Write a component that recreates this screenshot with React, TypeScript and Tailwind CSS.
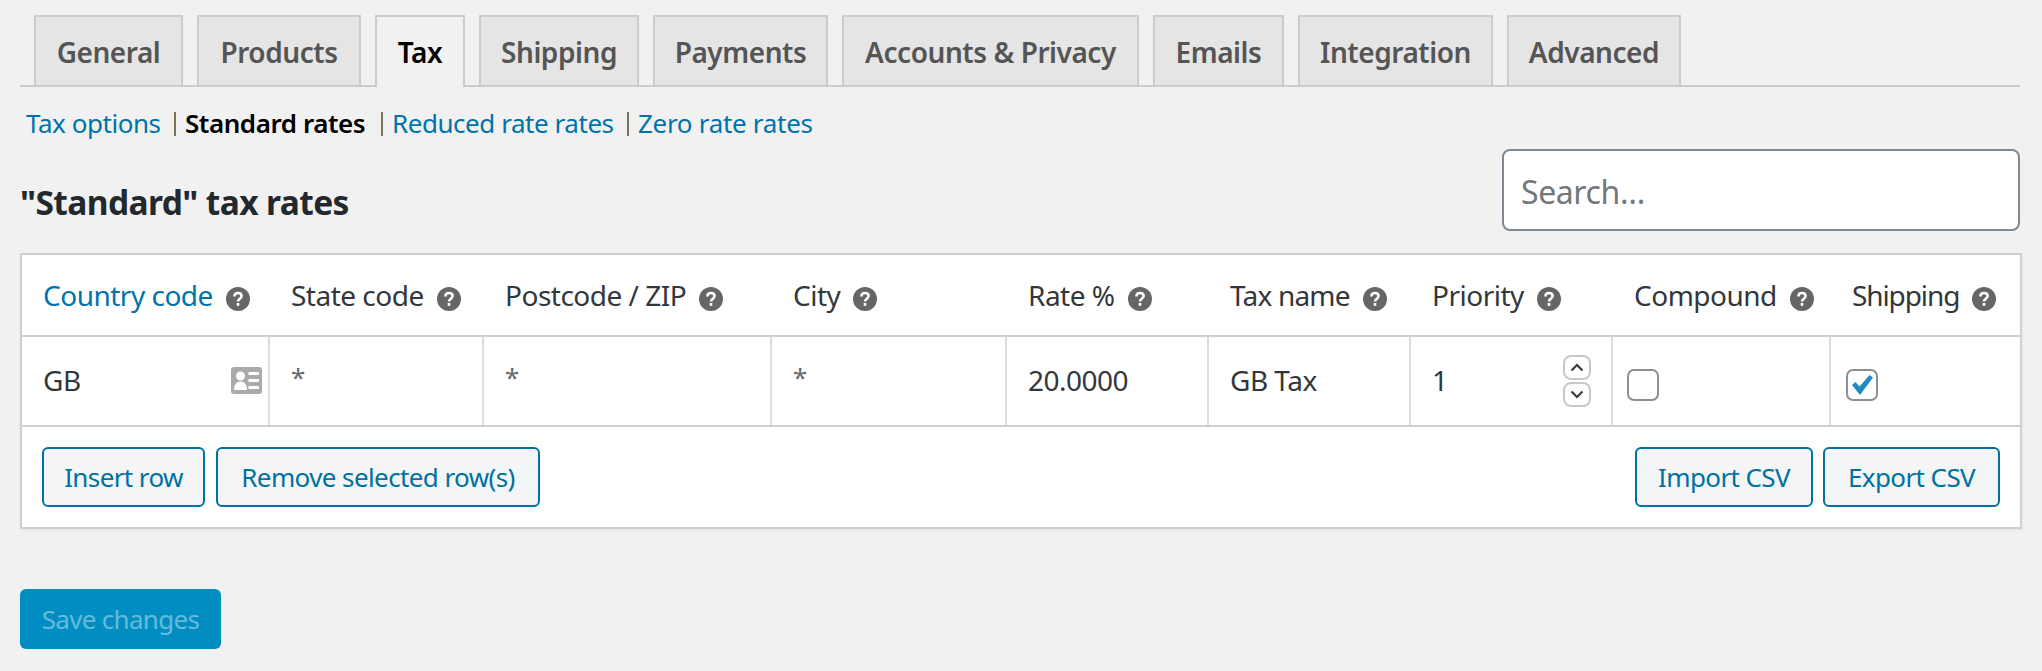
const tabs = [
  { label: "General", w: "w-[149px]" },
  { label: "Products", w: "w-[164px]" },
  { label: "Tax", w: "w-[90px]", active: true },
  { label: "Shipping", w: "w-[160px]" },
  { label: "Payments", w: "w-[175px]" },
  { label: "Accounts & Privacy", w: "w-[297px]" },
  { label: "Emails", w: "w-[131px]" },
  { label: "Integration", w: "w-[195px]" },
  { label: "Advanced", w: "w-[174px]" },
];

const columns = [
  { label: "Country code", w: "w-[246px]", value: "GB", link: true },
  { label: "State code", w: "w-[214px]", value: "*" },
  { label: "Postcode / ZIP", w: "w-[288px]", value: "*" },
  { label: "City", w: "w-[235px]", value: "*" },
  { label: "Rate %", w: "w-[202px]", value: "20.0000" },
  { label: "Tax name", w: "w-[202px]", value: "GB Tax", track: "tracking-[-0.8px]" },
  { label: "Priority", w: "w-[202px]", value: "1" },
  { label: "Compound", w: "w-[218px]", value: "" },
  { label: "Shipping", w: "w-[191px]", value: "", track: "tracking-[-1.1px]" },
];

function HelpTip() {
  return (
    <svg viewBox="0 0 24 24" className="ml-[13px] mt-[8px] h-[24px] w-[24px] shrink-0">
      <circle cx="12" cy="12" r="12" fill="#666" />
      <path
        d="M8.400 9.600c0-2.200 1.500-3.600 3.600-3.600s3.600 1.300 3.600 3.100c0 2.600-3.600 2.600-3.600 5.400"
        fill="none"
        stroke="#fff"
        strokeWidth="2.600"
      />
      <rect x="10.700" y="16" width="2.600" height="2.800" fill="#fff" />
    </svg>
  );
}

function IdCard() {
  return (
    <svg viewBox="0 0 31 27" className="h-[27px] w-[31px]">
      <rect width="31" height="27" rx="3" fill="#aaa" />
      <circle cx="9.500" cy="9" r="4.500" fill="#fff" />
      <path d="M3 23c0-5.500 2.500-8.500 6.500-8.500s6.500 3 6.500 8.500z" fill="#fff" />
      <rect x="17.500" y="5" width="10.500" height="3" fill="#fff" />
      <rect x="17.500" y="12" width="10.500" height="3" fill="#fff" />
      <rect x="17.500" y="19" width="10.500" height="3" fill="#fff" />
    </svg>
  );
}

function Spinner() {
  return (
    <div className="absolute right-[20px] top-[18px] flex flex-col gap-[2px]">
      <div className="flex h-[25px] w-[28px] items-center justify-center rounded-[8px] border-2 border-[#c8c8c8] bg-white">
        <svg viewBox="0 0 14 9" className="h-[9px] w-[14px]">
          <path d="M1.500 7.500 7 2l5.500 5.500" fill="none" stroke="#3c3c3c" strokeWidth="2.200" />
        </svg>
      </div>
      <div className="flex h-[25px] w-[28px] items-center justify-center rounded-[8px] border-2 border-[#c8c8c8] bg-white">
        <svg viewBox="0 0 14 9" className="h-[9px] w-[14px]">
          <path d="M1.500 1.500 7 7l5.500-5.500" fill="none" stroke="#3c3c3c" strokeWidth="2.200" />
        </svg>
      </div>
    </div>
  );
}

function Checkbox({ checked }: { checked?: boolean }) {
  return (
    <div className="flex h-[32px] w-[32px] items-center justify-center rounded-[7px] border-2 border-[#8c8f94] bg-white">
      {checked && (
        <svg viewBox="0 0 24 22" className="h-[22px] w-[24px]">
          <path d="M2 11l3.500-3 4 4.500L19.500 1 23 3.500 10 21z" fill="#1e8cbe" />
        </svg>
      )}
    </div>
  );
}

function OutlineButton({ label, className }: { label: string; className: string }) {
  return (
    <button className={`h-[60px] rounded-[6px] border-2 border-[#0071a1] bg-[#f3f5f6] text-[26px] text-[#0071a1] ${className}`}>
      {label}
    </button>
  );
}

export default function App() {
  return (
    <div className="h-[671px] w-[2042px] overflow-hidden bg-[#f1f1f1] pl-[20px] pt-[15px] font-['Noto_Sans',sans-serif] text-[26px] tracking-[-0.6px] text-[#32373c]">
      <div className="flex h-[72px] w-[2000px] gap-[14px] border-b-2 border-[#cccccc] pl-[14px]">
        {tabs.map((tab) => (
          <div
            key={tab.label}
            className={
              tab.active
                ? `flex h-[72px] items-center justify-center border-2 border-b-0 border-[#cccccc] bg-[#f1f1f1] pb-[2px] pt-[1px] text-[28px] font-semibold tracking-[-0.45px] text-black ${tab.w}`
                : `flex h-[70px] items-center justify-center border-2 border-b-0 border-[#cccccc] bg-[#e5e5e5] pt-[1px] text-[28px] font-semibold tracking-[-0.45px] text-[#555555] ${tab.w}`
            }
          >
            {tab.label}
          </div>
        ))}
      </div>

      <div className="mt-[14px] flex h-[44px] items-center pl-[6px] leading-[36px] tracking-[-0.45px]">
        <span className="w-[134px] whitespace-nowrap text-[#0073aa]">Tax options</span>
        <span className="ml-[14px] mt-[2px] h-[24px] w-[2px] bg-[#7d7360]" />
        <span className="ml-[9px] w-[182px] whitespace-nowrap font-semibold text-black">Standard rates</span>
        <span className="ml-[14px] mt-[2px] h-[24px] w-[2px] bg-[#7d7360]" />
        <span className="ml-[9px] w-[222px] whitespace-nowrap text-[#0073aa]">Reduced rate rates</span>
        <span className="ml-[13px] mt-[2px] h-[24px] w-[2px] bg-[#7d7360]" />
        <span className="ml-[9px] whitespace-nowrap tracking-[-0.3px] text-[#0073aa]">Zero rate rates</span>
      </div>

      <div className="mt-[4px] flex h-[82px] w-[2000px] items-center justify-between">
        <h2 className="mt-[24px] text-[33.500px] font-bold text-[#23282d]">"Standard" tax rates</h2>
        <div className="flex h-[82px] w-[518px] items-center rounded-[8px] border-2 border-[#7e8993] bg-white pl-[17px] pt-[3px] text-[32px] tracking-[-0.4px] text-[#72777c]">
          Search…
        </div>
      </div>

      <div className="mt-[22px] w-[2002px] border-2 border-[#ccd0d4] bg-white text-[28px] tracking-[-0.5px] shadow-[0_1px_2px_rgba(0,0,0,0.06)]">
        <div className="flex h-[82px] border-b-2 border-[#ccd0d4]">
          {columns.map((col, i) => (
            <div
              key={col.label}
              className={`flex items-center whitespace-nowrap pb-[1px] ${i === 0 ? "pl-[21px]" : "pl-[23px]"} ${col.w} ${col.track ?? ""} ${col.link ? "text-[#0073aa]" : ""}`}
            >
              {col.label}
              <HelpTip />
            </div>
          ))}
        </div>

        <div className="flex h-[90px] border-b-2 border-[#ccd0d4]">
          {columns.map((col, i) => (
            <div
              key={col.label}
              className={`relative flex items-center pb-[2px] pl-[21px] ${col.w} ${i > 0 ? "border-l-2 border-[#dcdcde]" : ""}`}
            >
              {col.value === "*" ? (
                <span className="-mt-[6px] text-[26px] text-[#646970]">*</span>
              ) : (
                <span>{col.value}</span>
              )}
              {i === 0 && (
                <div className="absolute right-[6px] top-[30px]">
                  <IdCard />
                </div>
              )}
              {col.label === "Priority" && <Spinner />}
              {col.label === "Compound" && (
                <div className="-ml-[7px] mt-[10px]">
                  <Checkbox />
                </div>
              )}
              {col.label === "Shipping" && (
                <div className="-ml-[6px] mt-[10px]">
                  <Checkbox checked />
                </div>
              )}
            </div>
          ))}
        </div>

        <div className="flex h-[100px] items-center justify-between pl-[20px] pr-[20px] tracking-[-0.6px]">
          <div className="flex gap-[11px]">
            <OutlineButton label="Insert row" className="w-[163px]" />
            <OutlineButton label="Remove selected row(s)" className="w-[324px]" />
          </div>
          <div className="flex gap-[10px]">
            <OutlineButton label="Import CSV" className="w-[178px]" />
            <OutlineButton label="Export CSV" className="w-[177px]" />
          </div>
        </div>
      </div>

      <button className="mt-[60px] h-[60px] w-[201px] rounded-[6px] bg-[#008ec2] tracking-[-0.7px] text-[#66bbda]">
        Save changes
      </button>
    </div>
  );
}
